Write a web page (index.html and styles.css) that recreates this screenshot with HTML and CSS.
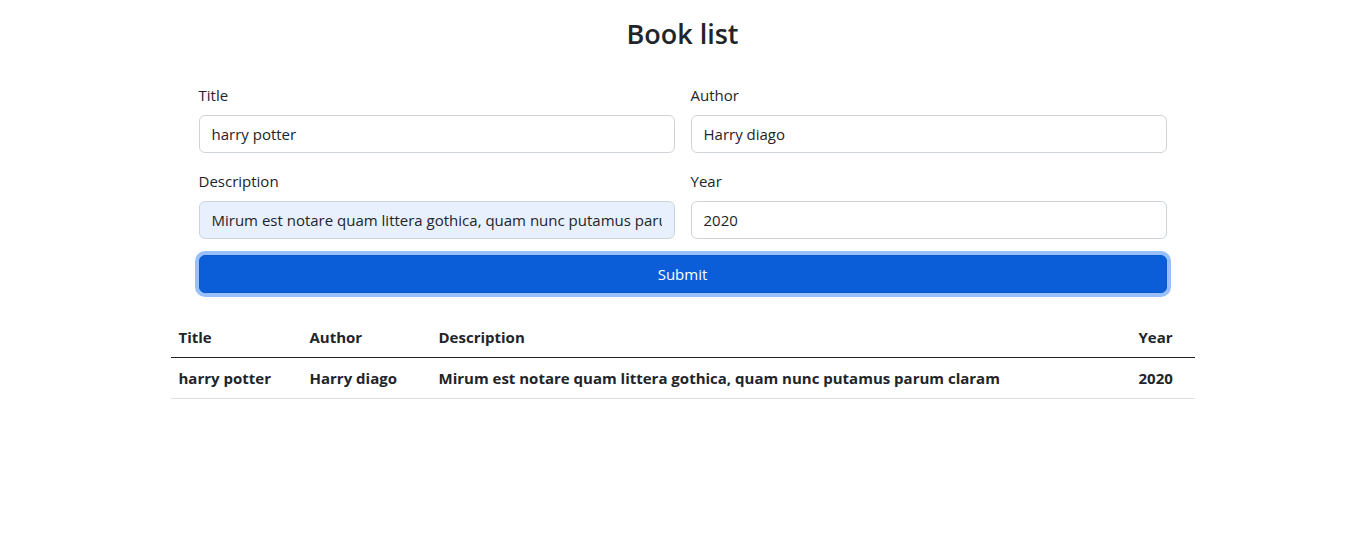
FILE: index.html
```html
<!DOCTYPE html>
<html lang="en">
<head>
<meta charset="utf-8">
<title>Book list</title>
<link rel="stylesheet" href="styles.css">
</head>
<body>
<main class="page">
  <h1 class="heading">Book list</h1>
  <form class="book-form">
    <div class="field">
      <label class="label" for="title">Title</label>
      <input class="input" id="title" type="text" value="harry potter">
    </div>
    <div class="field">
      <label class="label" for="author">Author</label>
      <input class="input" id="author" type="text" value="Harry diago">
    </div>
    <div class="field">
      <label class="label" for="desc">Description</label>
      <input class="input input-autofill" id="desc" type="text" value="Mirum est notare quam littera gothica, quam nunc putamus parum claram">
    </div>
    <div class="field">
      <label class="label" for="year">Year</label>
      <input class="input" id="year" type="text" value="2020">
    </div>
    <button class="submit" type="button">Submit</button>
  </form>
  <table class="books">
    <colgroup>
      <col class="c-title">
      <col class="c-author">
      <col class="c-desc">
      <col class="c-year">
    </colgroup>
    <thead>
      <tr><th>Title</th><th>Author</th><th>Description</th><th>Year</th></tr>
    </thead>
    <tbody>
      <tr><th>harry potter</th><th>Harry diago</th><th>Mirum est notare quam littera gothica, quam nunc putamus parum claram</th><th>2020</th></tr>
    </tbody>
  </table>
</main>
</body>
</html>
```
FILE: styles.css
```css
* { box-sizing: border-box; }
html, body { margin: 0; padding: 0; background: #fff; }
body {
  font-family: "Segoe UI", "Open Sans", "Noto Sans", sans-serif;
  font-size: 15px;
  line-height: 24px;
  color: #212529;
}
.page {
  width: 1024px;
  margin: 0 auto;
  padding-top: 17px;
  position: relative;
  left: 1px;
}
.heading {
  margin: 0 0 32px;
  font-size: 27px;
  font-weight: 600;
  line-height: 34px;
  text-align: center;
}
.book-form {
  width: 968px;
  margin: 0 auto;
  display: grid;
  grid-template-columns: 1fr 1fr;
  column-gap: 16px;
  row-gap: 16px;
}
.field { display: flex; flex-direction: column; }
.label { margin-bottom: 8px; }
.input {
  height: 38px;
  padding: 6px 12px;
  font: inherit;
  color: #212529;
  background: #fff;
  border: 1px solid #ced4da;
  border-radius: 6px;
  outline: none;
}
.input-autofill { background: #e8f0fe; }
.submit {
  grid-column: 1 / -1;
  height: 38px;
  font: inherit;
  color: #fff;
  background: #0b5ed7;
  border: 1px solid #0a58ca;
  border-radius: 6px;
  box-shadow: 0 0 0 4px #98c0fd;
}
.books {
  width: 1024px;
  margin-top: 24px;
  border-collapse: collapse;
  table-layout: fixed;
}
.c-title { width: 131px; }
.c-author { width: 129px; }
.c-desc { width: 700px; }
.c-year { width: 64px; }
.books th {
  text-align: left;
  font-weight: 700;
  padding: 8px;
  white-space: nowrap;
}
.books thead th { border-bottom: 1px solid #212529; }
.books tbody th { border-bottom: 1px solid #dee2e6; }
```
